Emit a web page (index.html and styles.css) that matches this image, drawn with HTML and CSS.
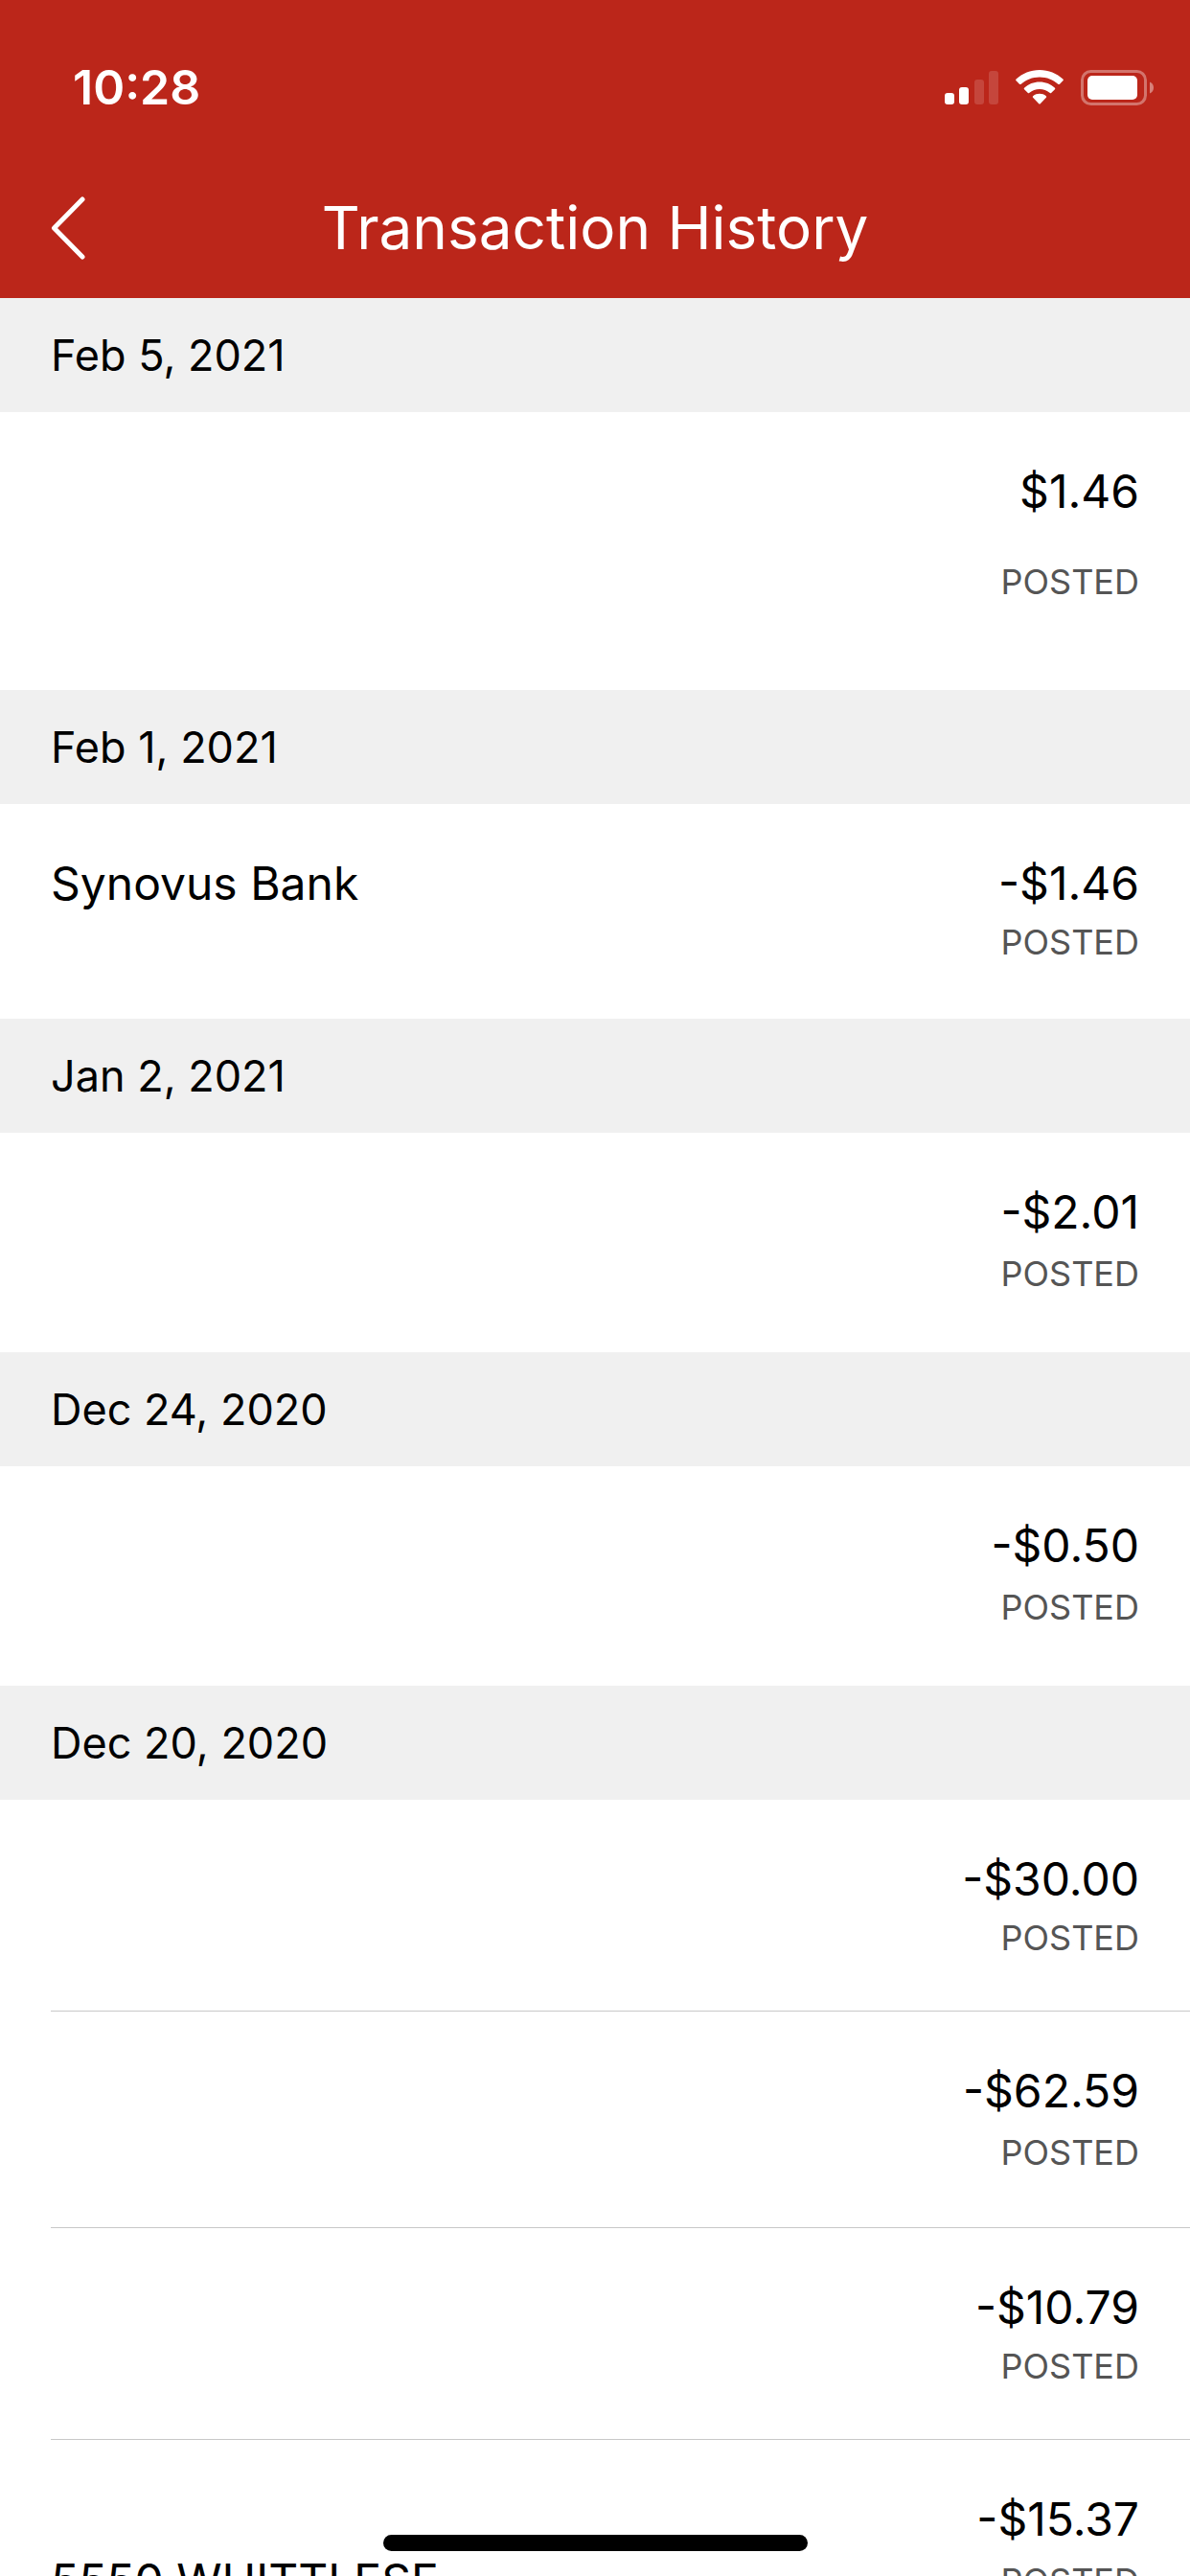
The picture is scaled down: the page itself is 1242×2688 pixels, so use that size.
FILE: index.html
```html
<!DOCTYPE html>
<html lang="en">
<head>
<meta charset="utf-8">
<meta name="viewport" content="width=device-width, initial-scale=1">
<title>Transaction History</title>
<link rel="stylesheet" href="styles.css">
</head>
<body>
<header class="top">
  <div class="status-bar">
    <time class="clock">10:28</time>
    <div class="indicators">
      <svg width="56" height="36" viewBox="0 0 56 36" fill="#fff" aria-label="Signal">
        <rect x="0" y="24" width="10" height="12" rx="3"/>
        <rect x="15" y="18" width="10" height="18" rx="3"/>
        <rect x="31" y="10" width="10" height="26" rx="3" opacity=".15"/>
        <rect x="46" y="1" width="10" height="35" rx="3" opacity=".15"/>
      </svg>
      <svg width="50" height="36" viewBox="0 0 50 36" fill="#fff" aria-label="Wi-Fi">
        <path d="M25 0C15.500 0 7 3.600.6 9.500q-.9.900 0 1.800L4 14.700q.8.800 1.700 0C10.800 10.200 17.500 7.400 25 7.400s14.200 2.800 19.300 7.300q.9.800 1.700 0l3.400-3.400q.9-.9 0-1.800C43 3.600 34.500 0 25 0z"/>
        <path d="M25 12.400c-6.200 0-11.600 2.300-15.700 6-.8.700-.8 1.300 0 2l3.300 3.300c.7.700 1.200.7 1.900.1 2.800-2.400 6.400-3.900 10.500-3.900s7.700 1.500 10.500 3.900c.7.600 1.200.6 1.900-.1l3.300-3.300c.8-.7.800-1.300 0-2-4.100-3.700-9.500-6-15.700-6z"/>
        <path d="M25 24.800c-2.600 0-4.800.8-6.600 2.300-.8.700-.8 1.200-.1 1.900l5.700 6c.7.800 1.300.8 2 0l5.700-6c.7-.7.700-1.200-.1-1.900-1.800-1.500-4-2.300-6.600-2.300z"/>
      </svg>
      <svg width="76" height="37" viewBox="0 0 76 37" aria-label="Battery">
        <rect x="1.500" y="1.500" width="66" height="34" rx="9" fill="none" stroke="#fff" stroke-width="3" opacity=".36"/>
        <rect x="7" y="6" width="52" height="25" rx="5" fill="#fff"/>
        <path d="M72 12.500c2.500 1 4 3.300 4 6s-1.500 5-4 6z" fill="#fff" opacity=".42"/>
      </svg>
    </div>
  </div>
  <nav class="nav-bar">
    <button class="back" type="button" aria-label="Back">
      <svg width="36" height="66" viewBox="0 0 36 66" fill="none" stroke="#fff" stroke-width="5" stroke-linecap="round" stroke-linejoin="round"><path d="M33 3 3.500 33 33 63"/></svg>
    </button>
    <h1 class="title">Transaction History</h1>
  </nav>
</header>

<main class="history">
  <section>
    <h2 class="date">Feb 5, 2021</h2>
    <ul class="rows">
      <li class="row row-tall"><span class="payee"></span><span class="amount">$1.46</span><span class="detail"></span><span class="state">POSTED</span></li>
    </ul>
  </section>
  <section>
    <h2 class="date">Feb 1, 2021</h2>
    <ul class="rows">
      <li class="row"><span class="payee">Synovus Bank</span><span class="amount">-$1.46</span><span class="detail"></span><span class="state">POSTED</span></li>
    </ul>
  </section>
  <section>
    <h2 class="date">Jan 2, 2021</h2>
    <ul class="rows">
      <li class="row row-detailed"><span class="payee"></span><span class="amount">-$2.01</span><span class="detail"></span><span class="state">POSTED</span></li>
    </ul>
  </section>
  <section>
    <h2 class="date">Dec 24, 2020</h2>
    <ul class="rows">
      <li class="row row-detailed"><span class="payee"></span><span class="amount">-$0.50</span><span class="detail"></span><span class="state">POSTED</span></li>
    </ul>
  </section>
  <section>
    <h2 class="date">Dec 20, 2020</h2>
    <ul class="rows">
      <li class="row"><span class="payee"></span><span class="amount">-$30.00</span><span class="detail"></span><span class="state">POSTED</span></li>
      <li class="row row-detailed"><span class="payee"></span><span class="amount">-$62.59</span><span class="detail"></span><span class="state">POSTED</span></li>
      <li class="row"><span class="payee"></span><span class="amount">-$10.79</span><span class="detail"></span><span class="state">POSTED</span></li>
      <li class="row row-detailed"><span class="payee"></span><span class="amount">-$15.37</span><span class="detail">5550 WHITTLESE</span><span class="state">POSTED</span></li>
    </ul>
  </section>
</main>
<div class="home-indicator"></div>
</body>
</html>
```

FILE: styles.css
```css
* {
  box-sizing: border-box;
}

body {
  display: flex;
  flex-direction: column;
  height: 100vh;
  margin: 0;
  overflow: hidden;
  background: #fff;
  color: #000;
  font-family: Inter, "Liberation Sans", sans-serif;
  font-size: 48px;
  line-height: 58px;
}

.top {
  flex: none;
  background: #bb261a;
  color: #fff;
}

.status-bar {
  display: flex;
  align-items: center;
  justify-content: space-between;
  padding: 62px 38px 46px 76px;
}

.clock {
  font-size: 50px;
  font-weight: 600;
}

.indicators {
  display: flex;
  align-items: center;
  gap: 18px;
}

.indicators svg,
.back svg {
  display: block;
}

.nav-bar {
  display: grid;
  grid-template-columns: 1fr auto 1fr;
  align-items: center;
  padding: 32px 53px 33px;
}

.back {
  justify-self: start;
  padding: 0;
  border: 0;
  background: none;
}

.title {
  margin: 0;
  font-size: 62px;
  font-weight: 400;
  line-height: 80px;
}

.history {
  flex: 1;
  min-height: 0;
  overflow-y: auto;
  scrollbar-width: none;
}

.date {
  margin: 0;
  padding: 31px 53px 30px;
  background: #f0f0f0;
  font-size: 45px;
  font-weight: 400;
}

.rows {
  margin: 0;
  padding: 0 0 4px 53px;
  list-style: none;
}

.row {
  display: grid;
  grid-template-columns: 1fr auto;
  row-gap: 10px;
  padding: 54px 53px 54px 0;
}

.row + .row {
  border-top: 1px solid #c8c8c8;
}

.row-detailed {
  row-gap: 13px;
  padding-bottom: 56px;
}

.row-tall {
  row-gap: 43px;
  padding-bottom: 87px;
}

.amount,
.state {
  text-align: right;
}

.detail {
  line-height: 44px;
}

.state {
  color: #555;
  font-size: 36px;
  line-height: 44px;
}

.home-indicator {
  position: fixed;
  bottom: 26px;
  left: 50%;
  width: 443px;
  height: 17px;
  margin-left: -221px;
  border-radius: 9px;
  background: #000;
}
```
